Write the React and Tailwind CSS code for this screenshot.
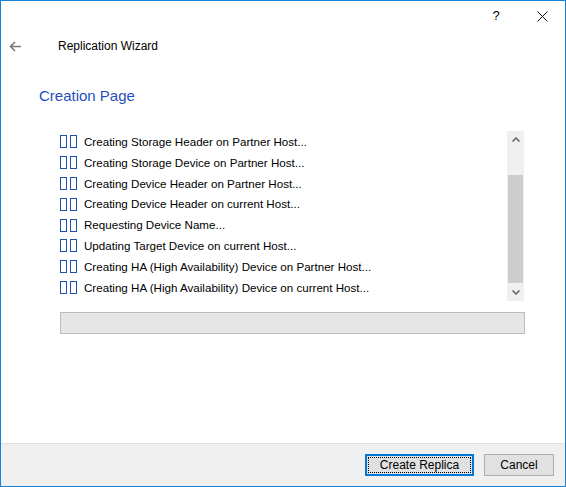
import React from 'react';

const steps = [
  'Creating Storage Header on Partner Host...',
  'Creating Storage Device on Partner Host...',
  'Creating Device Header on Partner Host...',
  'Creating Device Header on current Host...',
  'Requesting Device Name...',
  'Updating Target Device on current Host...',
  'Creating HA (High Availability) Device on Partner Host...',
  'Creating HA (High Availability) Device on current Host...',
];

function Tofu() {
  // the two "missing glyph" boxes in front of each step
  return (
    <span className="flex gap-[3px] mr-[7px]">
      <span className="w-[7px] h-[13px] border border-[#1d4fb3]" />
      <span className="w-[7px] h-[13px] border border-[#1d4fb3]" />
    </span>
  );
}

export default function App() {
  return (
    <div
      className="w-[566px] h-[487px] border border-[#1883d7] bg-white flex flex-col text-[12px] text-black"
      style={{ fontFamily: '"Liberation Sans", Arial, sans-serif' }}
    >
      {/* caption buttons */}
      <div className="h-[30px] flex justify-end">
        <div className="w-[46px] flex items-center justify-center text-[13px]">?</div>
        <div className="w-[46px] flex items-center justify-center">
          <svg width="11" height="11" viewBox="0 0 11 11" stroke="#111" strokeWidth="1">
            <path d="M0.5 0.5 L10.5 10.5 M10.5 0.5 L0.5 10.5" />
          </svg>
        </div>
      </div>

      {/* header */}
      <div className="h-[30px] flex items-center">
        <div className="w-[57px] pl-[8px] flex items-center">
          <svg width="13" height="11" viewBox="0 0 13 11" fill="none" stroke="#777" strokeWidth="1.6">
            <path d="M12 5.5 H2 M6 1 L1.5 5.5 L6 10" />
          </svg>
        </div>
        <span>Replication Wizard</span>
      </div>

      <div className="pl-[38px] pt-[24px] h-[70px] text-[15px] text-[#1f50bd]">Creation Page</div>

      {/* step list */}
      <div className="ml-[59px] w-[465px] h-[170px] flex text-[11.6px]">
        <div className="flex-1 flex flex-col">
          {steps.map((s) => (
            <div key={s} className="h-[20.9px] flex items-center">
              <Tofu />
              <span>{s}</span>
            </div>
          ))}
        </div>
        <div className="w-[17px] mr-[1px] bg-[#f0f0f0] flex flex-col items-center">
          <div className="h-[17px] flex items-center justify-center">
            <svg width="8" height="5" viewBox="0 0 8 5" fill="none" stroke="#606060" strokeWidth="1.5">
              <path d="M0.5 4.5 L4 1 L7.5 4.5" />
            </svg>
          </div>
          <div className="h-[27px]" />
          <div className="w-[15px] h-[108px] bg-[#cdcdcd]" />
          <div className="flex-1 flex items-center justify-center">
            <svg width="8" height="5" viewBox="0 0 8 5" fill="none" stroke="#606060" strokeWidth="1.5">
              <path d="M0.5 0.5 L4 4 L7.5 0.5" />
            </svg>
          </div>
        </div>
      </div>

      {/* progress bar */}
      <div className="ml-[59px] mt-[11px] w-[465px] h-[22px] border border-[#bcbcbc] bg-[#e6e6e6]" />

      <div className="flex-1" />

      {/* footer */}
      <div className="h-[43px] border-t border-[#dfdfdf] bg-[#f0f0f0] flex items-start justify-end pt-[10px] pr-[11px] gap-[10px]">
        <button className="w-[109px] h-[22px] border-2 border-[#0078d7] bg-[#e1e1e1] p-[1px]">
          <span className="w-full h-full flex items-center justify-center border border-dotted border-black">
            Create Replica
          </span>
        </button>
        <button className="w-[70px] h-[22px] border border-[#adadad] bg-[#e1e1e1] flex items-center justify-center">
          Cancel
        </button>
      </div>
    </div>
  );
}
